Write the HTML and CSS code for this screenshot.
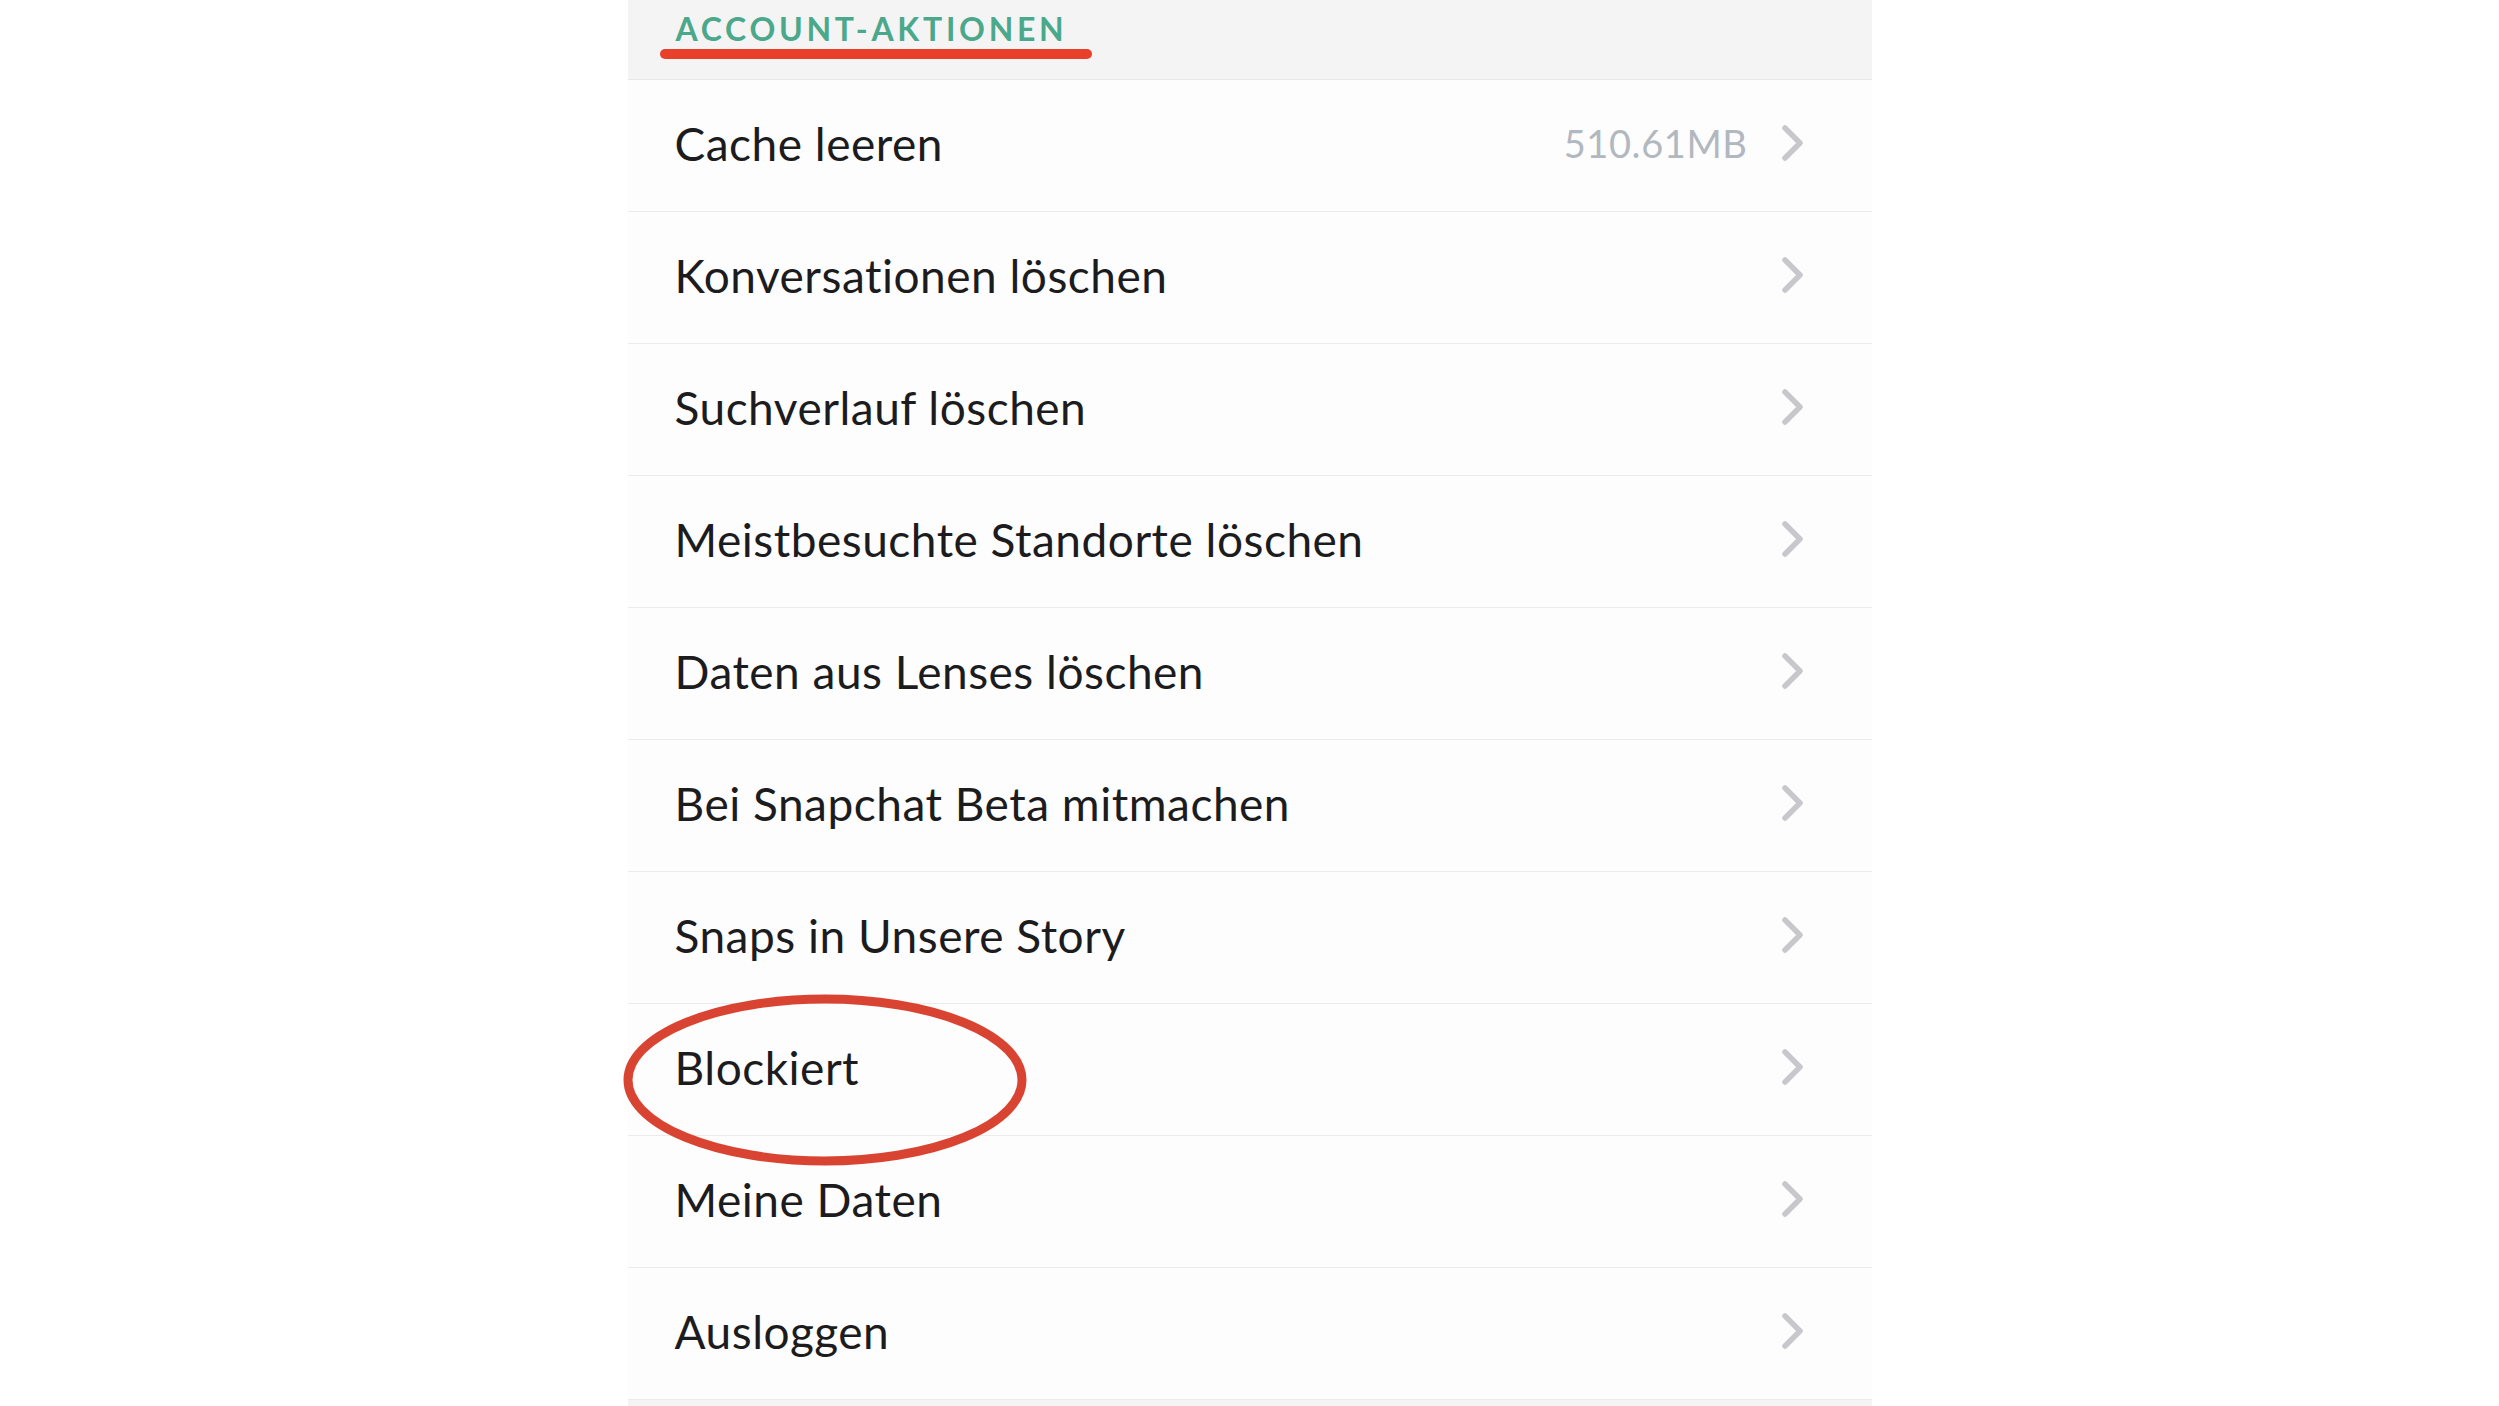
FILE: index.html
```html
<!DOCTYPE html>
<html lang="de">
<head>
    <meta charset="UTF-8">
    <title>Einstellungen</title>
    <link rel="stylesheet" href="styles.css">
</head>
<body>
    <div class="settings">
        <div class="section-header">
            <h2>ACCOUNT-AKTIONEN</h2>
            <span class="mark-line"></span>
        </div>

        <ul class="rows">
            <li class="row">
                <span class="label">Cache leeren</span>
                <span class="value">510.61MB</span>
                <svg class="chevron" viewBox="0 0 22 36"><polyline points="3,3 18,18 3,33"/></svg>
            </li>
            <li class="row">
                <span class="label">Konversationen löschen</span>
                <svg class="chevron" viewBox="0 0 22 36"><polyline points="3,3 18,18 3,33"/></svg>
            </li>
            <li class="row">
                <span class="label">Suchverlauf löschen</span>
                <svg class="chevron" viewBox="0 0 22 36"><polyline points="3,3 18,18 3,33"/></svg>
            </li>
            <li class="row">
                <span class="label">Meistbesuchte Standorte löschen</span>
                <svg class="chevron" viewBox="0 0 22 36"><polyline points="3,3 18,18 3,33"/></svg>
            </li>
            <li class="row">
                <span class="label">Daten aus Lenses löschen</span>
                <svg class="chevron" viewBox="0 0 22 36"><polyline points="3,3 18,18 3,33"/></svg>
            </li>
            <li class="row">
                <span class="label">Bei Snapchat Beta mitmachen</span>
                <svg class="chevron" viewBox="0 0 22 36"><polyline points="3,3 18,18 3,33"/></svg>
            </li>
            <li class="row">
                <span class="label">Snaps in Unsere Story</span>
                <svg class="chevron" viewBox="0 0 22 36"><polyline points="3,3 18,18 3,33"/></svg>
            </li>
            <li class="row marked">
                <span class="label">Blockiert</span>
                <svg class="chevron" viewBox="0 0 22 36"><polyline points="3,3 18,18 3,33"/></svg>
                <svg class="mark-circle" viewBox="0 0 404 172">
                    <ellipse cx="202" cy="86" rx="197" ry="81"/>
                </svg>
            </li>
            <li class="row">
                <span class="label">Meine Daten</span>
                <svg class="chevron" viewBox="0 0 22 36"><polyline points="3,3 18,18 3,33"/></svg>
            </li>
            <li class="row">
                <span class="label">Ausloggen</span>
                <svg class="chevron" viewBox="0 0 22 36"><polyline points="3,3 18,18 3,33"/></svg>
            </li>
        </ul>

        <div class="section-footer"></div>
    </div>
</body>
</html>
```

FILE: styles.css
```css
* {
    margin: 0;
    padding: 0;
    box-sizing: border-box;
}

body {
    font-family: 'Lato', 'Noto Sans', sans-serif;
    background-color: #ffffff;
    color: #1c1c1e;
}

.settings {
    width: 1244px;
    margin: 0 auto;
}

.section-header {
    position: relative;
    height: 80px;
    background-color: #f4f4f4;
    border-bottom: 1px solid #e8e8e8;
    padding-left: 48px;
}

.section-header h2 {
    font-size: 32px;
    font-weight: 700;
    letter-spacing: 3.7px;
    color: #4ba88b;
    line-height: 58px;
}

.mark-line {
    position: absolute;
    left: 32px;
    top: 49px;
    width: 432px;
    height: 10px;
    border-radius: 5px;
    background-color: #e8402a;
}

.rows {
    list-style: none;
}

.row {
    position: relative;
    display: flex;
    align-items: center;
    height: 132px;
    padding: 0 68px 5px 47px;
    background-color: #fdfdfd;
    border-bottom: 1px solid #ececec;
}

.row.marked {
    z-index: 1;
}

.label {
    flex-grow: 1;
    font-size: 46px;
    font-weight: 400;
    letter-spacing: 0.5px;
}

.value {
    font-size: 38px;
    color: #b2b8c0;
    letter-spacing: 0.6px;
    margin-right: 34px;
}

.chevron {
    width: 22px;
    height: 36px;
}

.chevron polyline {
    fill: none;
    stroke: #c7c7cc;
    stroke-width: 5.5;
    stroke-linecap: round;
    stroke-linejoin: round;
}

.mark-circle {
    position: absolute;
    left: -5px;
    top: -10px;
    width: 404px;
    height: 172px;
    overflow: visible;
}

.mark-circle ellipse {
    fill: none;
    stroke: #d94432;
    stroke-width: 9;
}

.section-footer {
    height: 20px;
    background-color: #f4f4f4;
}
```
